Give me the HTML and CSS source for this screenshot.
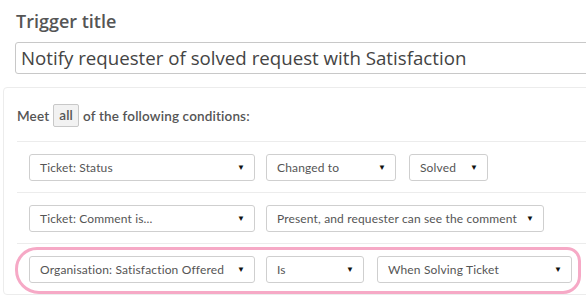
FILE: index.html
```html
<!DOCTYPE html>
<html lang="en">
<head>
    <meta charset="UTF-8">
    <meta name="viewport" content="width=device-width, initial-scale=1.0">
    <title>Trigger</title>
    <link rel="stylesheet" href="styles.css">
</head>
<body>
    <main class="page">
        <h1 class="label">Trigger title</h1>
        <div class="title-input">Notify requester of solved request with Satisfaction</div>

        <section class="conditions">
            <p class="meet">Meet <span class="all">all</span> of the following conditions:</p>

            <div class="rule">
                <div class="select w-field">Ticket: Status <span class="caret">&#9660;</span></div>
                <div class="select w-op1">Changed to <span class="caret">&#9660;</span></div>
                <div class="select w-val1">Solved <span class="caret">&#9660;</span></div>
            </div>
            <div class="rule">
                <div class="select w-field">Ticket: Comment is... <span class="caret">&#9660;</span></div>
                <div class="select w-op2">Present, and requester can see the comment <span class="caret">&#9660;</span></div>
            </div>
            <div class="rule highlight">
                <div class="select w-field">Organisation: Satisfaction Offered <span class="caret">&#9660;</span></div>
                <div class="select w-op3">Is <span class="caret">&#9660;</span></div>
                <div class="select w-val3">When Solving Ticket <span class="caret">&#9660;</span></div>
                <div class="marker"></div>
            </div>
        </section>
    </main>
</body>
</html>
```

FILE: styles.css
```css
*{
    margin: 0;
    padding: 0;
    box-sizing: border-box;
}

body{
    background-color: #fff;
    font-family: "Lato", "Liberation Sans", sans-serif;
    color: #555;
    overflow: hidden;
}

.page{
    width: 640px;
    padding-top: 9px;
}

.label{
    margin-left: 16px;
    font-family: "Open Sans", "Liberation Sans", sans-serif;
    font-size: 18px;
    font-weight: 600;
    line-height: 24px;
    color: #555;
}

.title-input{
    margin: 9px 0 0 15px;
    height: 32px;
    border: 1px solid #c8c8c8;
    border-radius: 3px;
    padding-left: 5px;
    font-family: "Open Sans", "Liberation Sans", sans-serif;
    font-size: 18.7px;
    line-height: 30px;
    color: #444;
    white-space: nowrap;
}

.conditions{
    margin: 13px 0 0 3px;
    border: 1px solid #ececec;
    border-radius: 4px;
    padding-left: 13px;
}

.meet{
    height: 53px;
    display: flex;
    align-items: center;
    gap: 4px;
    font-size: 13.5px;
    font-weight: 600;
    padding-top: 2px;
    white-space: nowrap;
    letter-spacing: 0.15px;
}

.all{
    display: inline-block;
    height: 23px;
    line-height: 21px;
    padding: 0 5px;
    background-color: #f2f2f2;
    border: 1px solid #c8c8c8;
    border-radius: 2px;
}

.rule{
    position: relative;
    display: flex;
    align-items: center;
    height: 51px;
    border-top: 1px solid #ececec;
    padding-left: 12px;
    gap: 11px;
}

.select{
    height: 27px;
    display: flex;
    align-items: center;
    justify-content: space-between;
    padding: 0 9px 0 10px;
    border: 1px solid #cfcfcf;
    border-radius: 3px;
    font-size: 12px;
    letter-spacing: 0.15px;
    color: #555;
    background-color: #fff;
    white-space: nowrap;
}

.caret{
    font-size: 8px;
    color: #111;
    letter-spacing: 0;
}

.w-field{ width: 226px; }
.w-op1{ width: 130px; }
.w-val1{ width: 79px; margin-left: 2px; }
.w-op2{ width: 278px; }
.w-op3{ width: 98px; }
.w-val3{ width: 195px; margin-left: 2px; }

.marker{
    position: absolute;
    left: -2px;
    top: 3px;
    width: 566px;
    height: 47px;
    border: 3px solid #f6a9c6;
    border-radius: 22px 14px 18px 24px;
    pointer-events: none;
}
```
